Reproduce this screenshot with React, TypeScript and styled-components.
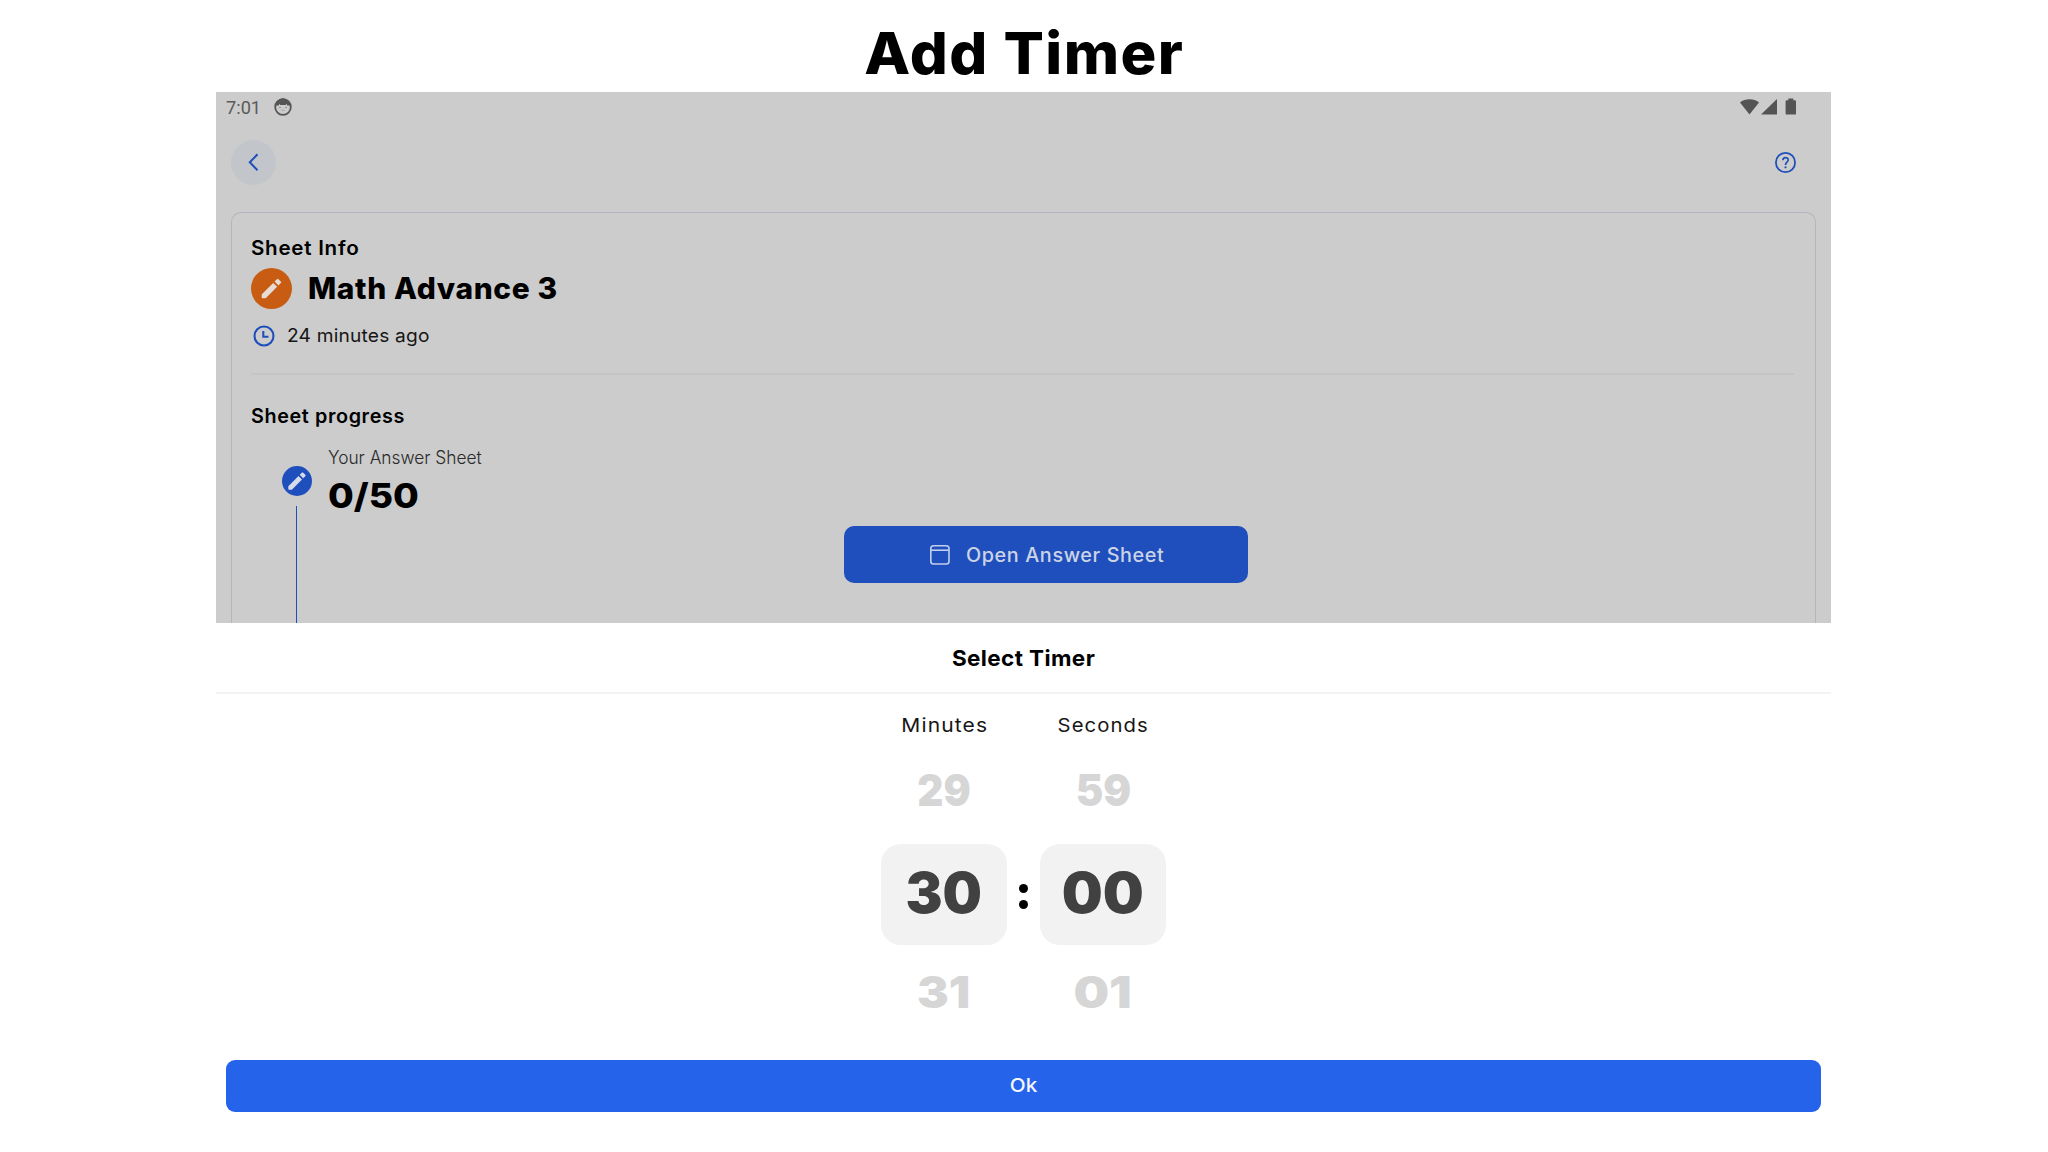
import type { ReactNode } from "react"
import styled, { createGlobalStyle } from "styled-components"

const FONT = `Inter, "Open Sans", "Liberation Sans", sans-serif`

const COLORS = {
    dimmed: "#cccccc",
    dimmedBlue: "#1f4fbc",
    dimmedOrange: "#c85c12",
    blue: "#2563eb"
}

export default function App() {
    return <>
        <GlobalStyle/>
        <Page>
            <PageTitle><Label size={58} weight={780} spacing={1.4} stretch={1.03}>Add Timer</Label></PageTitle>
            <Screen>
                <SheetScreen/>
                <TimerPicker/>
            </Screen>
        </Page>
    </>
}

function SheetScreen() {
    return <Backdrop>
        <StatusBar>
            <Clock>7:01</Clock>
            <FaceIcon/>
            <StatusIcons/>
        </StatusBar>
        <NavBar>
            <BackButton>
                <svg width="11" height="19" viewBox="0 0 11 19" fill="none" stroke={COLORS.dimmedBlue} strokeWidth="2"><path d="M9.5 1.3 1.8 9.3 9.5 17.3"/></svg>
            </BackButton>
            <HelpIcon/>
        </NavBar>
        <Card>
            <Row height={24}><Label size={19.6} weight={600} spacing={0.7} stretch={1.05} origin="left">Sheet Info</Label></Row>
            <Row height={41} top={6.5} gap={16}>
                <Badge size={41} color={COLORS.dimmedOrange}><PencilIcon size={27} color="#e6ddd6"/></Badge>
                <Label size={29.5} weight={850} spacing={0.6} stretch={1.015} drop={0.5} origin="left">Math Advance 3</Label>
            </Row>
            <Row height={25} top={14.5} gap={12}>
                <ClockIcon/>
                <Label size={18.4} weight={370} spacing={0.2} stretch={1.04} origin="left" color="#161616">24 minutes ago</Label>
            </Row>
            <Divider/>
            <Row height={25} top={29}><Label size={19.6} weight={600} spacing={0.6} stretch={1.01} origin="left">Sheet progress</Label></Row>
            <Progress>
                <Rail>
                    <Badge size={30} color={COLORS.dimmedBlue}><PencilIcon size={24} color="#d6dcea"/></Badge>
                    <RailLine/>
                </Rail>
                <ProgressBody>
                    <Row height={21}><Label size={18.4} weight={270} stretch={0.94} drop={0.5} origin="left" color="#2a2a2a">Your Answer Sheet</Label></Row>
                    <Row height={40} top={9}><Label size={34.5} weight={800} stretch={1.08} origin="left">0/50</Label></Row>
                    <OpenButton>
                        <SheetIcon/>
                        <Label size={19.4} weight={530} spacing={0.6} stretch={1.02} drop={1} origin="left" color="#cbd4e6">Open Answer Sheet</Label>
                    </OpenButton>
                </ProgressBody>
            </Progress>
        </Card>
    </Backdrop>
}

function TimerPicker() {
    return <Sheet>
        <SheetTitle><Label size={21.8} weight={650} spacing={0.4} stretch={1.03} drop={0.8}>Select Timer</Label></SheetTitle>
        <Picker>
            <Wheel
                label={{ text: "Minutes", stretch: 1.12 }}
                previous={{ text: "29", stretch: 0.92 }}
                current={{ text: "30", stretch: 0.99 }}
                next={{ text: "31", stretch: 1.08 }}
            />
            <Colon><Dot/><Dot/></Colon>
            <Wheel
                label={{ text: "Seconds", stretch: 1.08 }}
                previous={{ text: "59", stretch: 0.94 }}
                current={{ text: "00", stretch: 1.03 }}
                next={{ text: "01", stretch: 1.14 }}
            />
        </Picker>
        <OkButton><Label size={19} weight={530} stretch={1.09} drop={-1} color="#f4f7ff">Ok</Label></OkButton>
    </Sheet>
}

interface WheelText {
    text: string
    stretch: number
}

function Wheel(props: { label: WheelText, previous: WheelText, current: WheelText, next: WheelText }) {
    return <WheelColumn>
        <WheelLabel><Label size={18.8} weight={380} spacing={1} stretch={props.label.stretch} drop={0.6} color="#161616">{props.label.text}</Label></WheelLabel>
        <WheelItem><Label size={44} weight={900} stretch={props.previous.stretch} drop={-1} color="#d6d6d6">{props.previous.text}</Label></WheelItem>
        <WheelCurrent><Label size={56} weight={900} stretch={props.current.stretch} drop={-0.5} color="#414141">{props.current.text}</Label></WheelCurrent>
        <WheelItem><Label size={44} weight={900} stretch={props.next.stretch} color="#d6d6d6">{props.next.text}</Label></WheelItem>
    </WheelColumn>
}

interface LabelProps {
    size: number
    weight: number
    spacing?: number
    stretch?: number
    drop?: number
    origin?: "left" | "center"
    color?: string
    children: ReactNode
}

function Label({ size, weight, spacing = 0, stretch = 1, drop = 0, origin = "center", color = "#000", children }: LabelProps) {
    return <LabelSpan $size={size} $weight={weight} $spacing={spacing} $stretch={stretch} $drop={drop} $origin={origin} $color={color}>{children}</LabelSpan>
}

function FaceIcon() {
    return <svg width="18" height="18" viewBox="0 0 18 18" fill="none">
        <circle cx="9" cy="9" r="7.8" stroke="#555" strokeWidth="1.8"/>
        <path d="M1.8 7.4C2.2 3 5.400.6 9 .6s6.800 2.400 7.200 6.800H13.200L12.600 5.800 11.800 7H6.200L5.400 5.800 4.800 7.400Z" fill="#555"/>
        <circle cx="6" cy="9.500" r=".7" fill="#777"/>
        <circle cx="12" cy="9.500" r=".7" fill="#777"/>
        <path d="M7.500 12.300h3" stroke="#999" strokeWidth=".8"/>
    </svg>
}

function StatusIcons() {
    return <StatusSvg width="56" height="18" viewBox="0 0 56 18" fill="#545454">
        <path d="M0 4.500C5 .1 14 .1 19 4.500L9.500 16.500Z"/>
        <path d="M37 1v15.500H21Z"/>
        <path d="M48.300 .6h5v1.600h1.500q1.200 0 1.200 1.200v12q0 1.200-1.200 1.200h-8q-1.200 0-1.200-1.200v-12q0-1.200 1.200-1.200h1.500Z"/>
    </StatusSvg>
}

function HelpIcon() {
    return <svg width="21" height="21" viewBox="0 0 21 21" fill="none" stroke={COLORS.dimmedBlue}>
        <circle cx="10.500" cy="10.500" r="9.600" strokeWidth="1.800"/>
        <path d="M7.900 8.200C7.900 4.700 13.200 4.700 13.200 8.100C13.200 10.200 10.500 10.300 10.500 12.900" strokeWidth="1.700"/>
        <circle cx="10.500" cy="15.300" r="1.100" fill={COLORS.dimmedBlue} stroke="none"/>
    </svg>
}

function ClockIcon() {
    return <ClockSvg width="22" height="22" viewBox="0 0 22 22" fill="none" stroke={COLORS.dimmedBlue} strokeWidth="2.100">
        <circle cx="11" cy="11" r="9.500"/>
        <path d="M10.300 6v5.800h5.200"/>
    </ClockSvg>
}

function PencilIcon({ size, color }: { size: number, color: string }) {
    return <svg width={size} height={size} viewBox="0 0 24 24" fill={color}>
        <path d="M3.300 17.600v2.400q0 .7.700.7h2.400q.4 0 .7-.3L17 10.500 13.500 7 3.600 16.900q-.3.300-.3.700Z"/>
        <path d="M14.700 5.800l3.500 3.500 2.100-2.100q.7-.7 0-1.400l-2.100-2.100q-.7-.7-1.400 0Z"/>
    </svg>
}

function SheetIcon() {
    return <svg width="20" height="20" viewBox="0 0 20 20" fill="none" stroke="#c3cfec" strokeWidth="1.600">
        <rect x=".8" y=".8" width="18.200" height="18.200" rx="2.800"/>
        <path d="M.8 5.200h18.200"/>
    </svg>
}


const GlobalStyle = createGlobalStyle`
    * {
        box-sizing: border-box;
    }
    body {
        margin: 0;
        background: #fff;
        font-family: ${FONT};
    }
`

const Page = styled.main`
    width: 2048px;
    height: 1152px;
    overflow: hidden;
    background: #fff;
`

const PageTitle = styled.h1`
    display: flex;
    align-items: center;
    justify-content: center;
    height: 92px;
    margin: 0;
    padding-top: 14px;
`

const Screen = styled.section`
    width: 1615px;
    margin-left: 216px;
`

const LabelSpan = styled.span<{ $size: number, $weight: number, $spacing: number, $stretch: number, $drop: number, $origin: string, $color: string }>`
    display: inline-block;
    font-size: ${p => p.$size}px;
    font-weight: ${p => p.$weight};
    letter-spacing: ${p => p.$spacing}px;
    margin-right: ${p => -p.$spacing}px;
    line-height: 1;
    color: ${p => p.$color};
    white-space: nowrap;
    transform: translateY(${p => p.$drop}px) scaleX(${p => p.$stretch});
    transform-origin: ${p => p.$origin} center;
`

const Backdrop = styled.div`
    display: flex;
    flex-direction: column;
    height: 531px;
    background: ${COLORS.dimmed};
`

const StatusBar = styled.div`
    display: flex;
    align-items: center;
    height: 30px;
    padding: 0 35px 0 10px;
`

const Clock = styled.span`
    width: 48px;
    padding-top: 2px;
    font: 400 18.2px/1 Roboto, sans-serif;
    color: #5a5a5a;
`

const StatusSvg = styled.svg`
    margin-left: auto;
`

const NavBar = styled.div`
    display: flex;
    align-items: center;
    justify-content: space-between;
    height: 81px;
    padding: 0 35px 0 15px;
`

const BackButton = styled.button`
    display: flex;
    align-items: center;
    justify-content: center;
    width: 45px;
    height: 45px;
    padding: 0 1px 0 0;
    border: none;
    border-radius: 50%;
    background: #c2c6ca;
`

const Card = styled.article`
    display: flex;
    flex: 1;
    flex-direction: column;
    min-height: 0;
    margin: 9px 15px 0;
    padding: 24px 21px 0 19px;
    border: 1px solid #b4b5be;
    border-bottom: none;
    border-radius: 10px 10px 0 0;
    overflow: hidden;
`

const Row = styled.div<{ height: number, top?: number, gap?: number }>`
    display: flex;
    flex: none;
    align-items: center;
    gap: ${p => p.gap ?? 0}px;
    height: ${p => p.height}px;
    margin-top: ${p => p.top ?? 0}px;
`

const Badge = styled.div<{ size: number, color: string }>`
    display: flex;
    flex: none;
    align-items: center;
    justify-content: center;
    width: ${p => p.size}px;
    height: ${p => p.size}px;
    border-radius: 50%;
    background: ${p => p.color};
`

const ClockSvg = styled.svg`
    margin-left: 1.5px;
`

const Divider = styled.hr`
    flex: none;
    width: 100%;
    height: 2px;
    margin: 25px 0 0;
    border: none;
    background: #c5c5c5;
`

const Progress = styled.div`
    display: flex;
    flex: 1;
    min-height: 0;
`

const Rail = styled.div`
    display: flex;
    flex: none;
    flex-direction: column;
    align-items: center;
    width: 30px;
    margin: 36.5px 16px 0 30.5px;
`

const RailLine = styled.div`
    flex: 1;
    width: 1.5px;
    margin-top: 10px;
    background: #1f4fbc;
`

const ProgressBody = styled.div`
    padding-top: 17px;
`

const OpenButton = styled.button`
    display: flex;
    align-items: center;
    justify-content: center;
    gap: 16px;
    width: 404px;
    height: 57px;
    margin: 10px 0 0 516.5px;
    padding: 0 3px 0 0;
    border: none;
    border-radius: 10px;
    background: ${COLORS.dimmedBlue};
    font-family: inherit;
`

const Sheet = styled.div`
    display: flex;
    flex-direction: column;
    align-items: center;
    background: #fff;
`

const SheetTitle = styled.div`
    display: flex;
    align-items: center;
    justify-content: center;
    width: 100%;
    height: 71px;
    border-bottom: 2px solid #f3f3f3;
`

const Picker = styled.div`
    display: flex;
    justify-content: center;
    height: 366px;
`

const WheelColumn = styled.div`
    display: flex;
    flex-direction: column;
    align-items: center;
    width: 126px;
`

const WheelLabel = styled.div`
    display: flex;
    align-items: center;
    height: 24px;
    margin-top: 19px;
`

const WheelItem = styled.div`
    display: flex;
    align-items: center;
    justify-content: center;
    height: 107px;
    &:last-child {
        height: 94px;
    }
`

const WheelCurrent = styled.div`
    display: flex;
    align-items: center;
    justify-content: center;
    width: 126px;
    height: 101px;
    padding-bottom: 4px;
    border-radius: 20px;
    background: #f2f2f2;
`

const Colon = styled.div`
    display: flex;
    flex-direction: column;
    align-items: center;
    gap: 7px;
    width: 33px;
    padding-top: 190px;
`

const Dot = styled.span`
    width: 9px;
    height: 9px;
    border-radius: 50%;
    background: #000;
`

const OkButton = styled.button`
    display: flex;
    align-items: center;
    justify-content: center;
    width: 1595px;
    height: 52px;
    border: none;
    border-radius: 9px;
    background: ${COLORS.blue};
    font-family: inherit;
`
